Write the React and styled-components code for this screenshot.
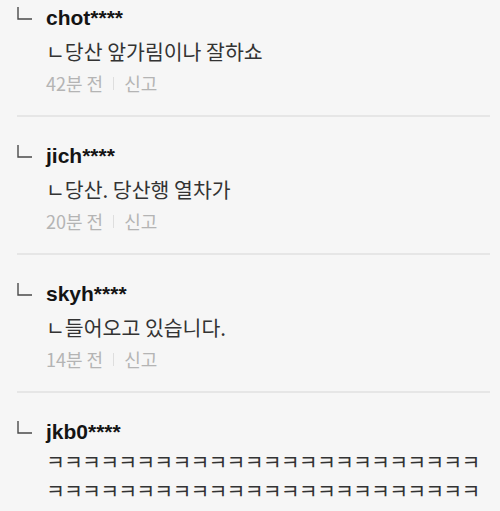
import React from 'react';
import styled, { createGlobalStyle } from 'styled-components';

const GlobalStyle = createGlobalStyle`
  html, body {
    margin: 0;
    padding: 0;
    background: #f6f6f6;
  }
  body {
    font-family: "Noto Sans CJK KR", "Noto Sans", sans-serif;
  }
`;

const Page = styled.div`
  width: 500px;
  height: 511px;
  overflow: hidden;
  background: #f6f6f6;
`;

// 스크롤된 상태라 첫 댓글 위쪽이 잘려 있음
const List = styled.div`
  margin-top: -21px;
  padding: 0 10px 0 17px;
`;

const Reply = styled.div`
  display: flex;
  gap: 14px;
  padding: 26px 0 21px;
  border-bottom: 2px solid #e6e6e6;
`;

const Marker = styled.svg`
  flex: none;
  width: 15px;
  height: 13px;
  margin-top: 2px;
`;

const Body = styled.div`
  flex: 1;
  min-width: 0;
  display: flex;
  flex-direction: column;
`;

const Name = styled.div`
  font-family: "Liberation Sans", Arial, sans-serif;
  font-weight: bold;
  font-size: 21px;
  line-height: 26px;
  color: #141414;
`;

const Text = styled.div`
  margin-top: ${(p) => (p.tight ? '2px' : '6px')};
  font-size: 20.5px;
  line-height: 29px;
  color: #333;
  letter-spacing: ${(p) => (p.tight ? '-0.8px' : '0')};
  word-break: break-all;
`;

const Meta = styled.div`
  margin-top: 6px;
  display: flex;
  align-items: center;
  gap: 10px;
  font-size: 18px;
  line-height: 22px;
  color: #b4b4b4;
`;

const Sep = styled.span`
  width: 1px;
  height: 13px;
  background: #dedede;
`;

const replies = [
  { id: 1, name: 'chot****', text: 'ㄴ당산 앞가림이나 잘하쇼', time: '42분 전' },
  { id: 2, name: 'jich****', text: 'ㄴ당산. 당산행 열차가', time: '20분 전' },
  { id: 3, name: 'skyh****', text: 'ㄴ들어오고 있습니다.', time: '14분 전' },
  { id: 4, name: 'jkb0****', text: 'ㅋ'.repeat(48), time: '11분 전', tight: true },
];

const ReplyMarker = () => (
  <Marker viewBox="0 0 15 13">
    <path d="M1 0 V12 H15" fill="none" stroke="#4a4a4a" strokeWidth="1.4" />
  </Marker>
);

const App = () => (
  <Page>
    <GlobalStyle />
    <List>
      {replies.map((r) => (
        <Reply key={r.id}>
          <ReplyMarker />
          <Body>
            <Name>{r.name}</Name>
            <Text tight={r.tight}>{r.text}</Text>
            <Meta>
              <span>{r.time}</span>
              <Sep />
              <span>신고</span>
            </Meta>
          </Body>
        </Reply>
      ))}
    </List>
  </Page>
);

export default App;
